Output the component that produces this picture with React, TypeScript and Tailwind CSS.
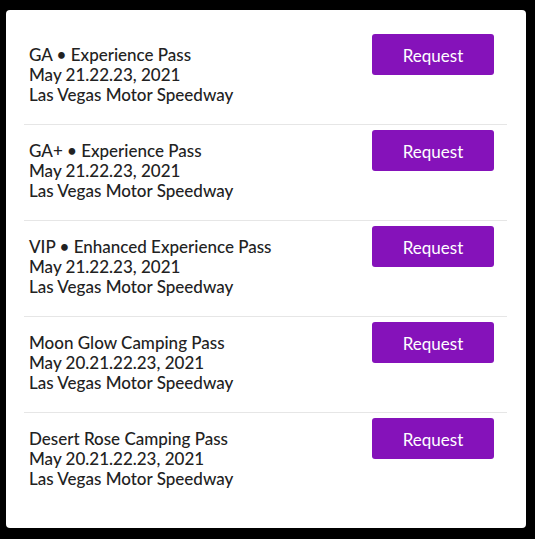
import React from 'react';

interface Pass {
  title: string;
  dates: string;
  venue: string;
}

const passes: Pass[] = [
  { title: 'GA • Experience Pass', dates: 'May 21.22.23, 2021', venue: 'Las Vegas Motor Speedway' },
  { title: 'GA+ • Experience Pass', dates: 'May 21.22.23, 2021', venue: 'Las Vegas Motor Speedway' },
  { title: 'VIP • Enhanced Experience Pass', dates: 'May 21.22.23, 2021', venue: 'Las Vegas Motor Speedway' },
  { title: 'Moon Glow Camping Pass', dates: 'May 20.21.22.23, 2021', venue: 'Las Vegas Motor Speedway' },
  { title: 'Desert Rose Camping Pass', dates: 'May 20.21.22.23, 2021', venue: 'Las Vegas Motor Speedway' },
];

const PassRow: React.FC<{ pass: Pass; first: boolean }> = ({ pass, first }) => (
  <div
    className={`flex items-start justify-between pb-[19px] pl-[5px] pr-[13px] ${
      first ? 'pt-[6px]' : 'pt-[5px] border-t border-[#e6e6e6]'
    }`}
  >
    <div className="mt-[11px] text-[17px] leading-[20px] font-medium text-[#222]">
      <div>{pass.title}</div>
      <div>{pass.dates}</div>
      <div>{pass.venue}</div>
    </div>
    <button
      type="button"
      className="w-[122px] h-[41px] pt-[2px] rounded-[3px] bg-[#8512ba] text-white text-[17px]"
    >
      Request
    </button>
  </div>
);

const App: React.FC = () => {
  return (
    <div className="min-h-screen w-[535px] h-[539px] bg-black pt-[10px] pl-[6px]" style={{ fontFamily: 'Lato, "Noto Sans", sans-serif' }}>
      <div className="w-[520px] h-[518px] bg-white rounded-[4px] pt-[18px] px-[18px]">
        <div className="w-[483px]">
          {passes.map((p, i) => (
            <PassRow key={p.title} pass={p} first={i === 0} />
          ))}
        </div>
      </div>
    </div>
  );
};

export default App;
